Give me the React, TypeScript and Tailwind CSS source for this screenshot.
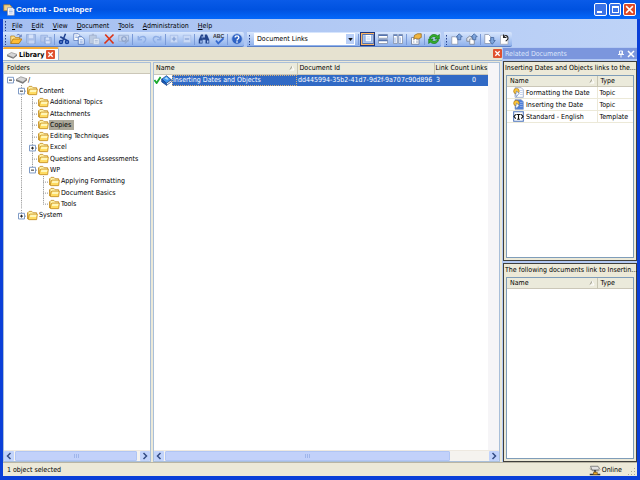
import React from 'react';

interface IconProps {
    className?: string;
}

const Svg: React.FC<{ children: React.ReactNode; className?: string }> = ({ children, className = 'w-[12px] h-[12px]' }) => (
    <svg viewBox="0 0 16 16" className={`shrink-0 ${className}`} fill="none" aria-hidden="true">
        {children}
    </svg>
);

const FolderIcon: React.FC<IconProps> = ({ className }) => (
    <Svg className={className}>
        <path d="M1 13V4l2-2h4l2 2h5v3" fill="#fff3a8" stroke="#c28a20" strokeWidth="1.2" />
        <path d="M1 4v9l2 1h11l1-8H5L3 7l-1 6" fill="#ffdc62" stroke="#c28a20" strokeWidth="1.2" />
        <path d="M5 7h9l-1 3H4z" fill="#fff6b8" />
    </Svg>
);

const OpenIcon = () => (
    <Svg>
        <path d="M1 14V4h5l1 2h6v3" fill="#ffe189" stroke="#b8811a" />
        <path d="M1 14l3-6h12l-4 6z" fill="#ffbd35" stroke="#a8700d" />
        <path d="M9 3c2-2 4-1 5 1M15 2v3h-3" stroke="#405da8" />
    </Svg>
);

const SaveIcon = () => (
    <Svg>
        <path d="M2 2h12v12H3l-1-1z" fill="#a9bfe8" stroke="#8fa9da" />
        <path d="M5 2h6v5H5z" fill="#d6e3fa" />
        <path d="M5 10h7v4H5z" fill="#c5d5f4" />
    </Svg>
);

const SaveAllIcon = () => (
    <Svg>
        <path d="M1 3h9v9H1z" fill="#b2c6ec" stroke="#96afdd" />
        <path d="M6 6h9v8H6z" fill="#a9bfe8" stroke="#8fa9da" />
        <path d="M8 6h4v3H8zM8 11h5v3H8z" fill="#d6e3fa" />
    </Svg>
);

const CutIcon = () => (
    <Svg>
        <path d="M10 1L6 11M3 5l9 5" stroke="#20418f" strokeWidth="2" />
        <circle cx="4" cy="12" r="2" stroke="#123c9c" strokeWidth="2" />
        <circle cx="12" cy="12" r="2" stroke="#123c9c" strokeWidth="2" />
    </Svg>
);

const CopyIcon = () => (
    <Svg>
        <path d="M1 1h6l2 2v7H1z" fill="#fff" stroke="#5577bb" />
        <path d="M7 5h5l3 3v7H7z" fill="#f3f8ff" stroke="#3d64b0" />
        <path d="M3 4h3M3 6h4M9 9h4M9 11h4M9 13h4" stroke="#7c9ddb" />
    </Svg>
);

const PasteIcon = () => (
    <Svg>
        <path d="M2 3h9v11H2z" fill="#bccbe2" stroke="#9daecc" />
        <path d="M5 1h3v3H5z" fill="#aab9d5" />
        <path d="M7 7h8v8H7z" fill="#e1e9f5" stroke="#a4b5d3" />
        <path d="M9 10h4M9 12h4" stroke="#a4b5d3" />
    </Svg>
);

const DeleteIcon = () => (
    <Svg>
        <path d="M3 2l11 12M14 2L2 14" stroke="#dd3215" strokeWidth="2.2" />
    </Svg>
);

const RenameIcon = () => (
    <Svg>
        <path d="M1 3h13v8H1z" fill="#c3d1ea" stroke="#94a9cf" />
        <circle cx="8" cy="8" r="3" stroke="#8aa0c9" strokeWidth="1.5" />
        <path d="M9 14l5-5" stroke="#94a9cf" strokeWidth="2" />
    </Svg>
);

const UndoIcon = () => (
    <Svg>
        <path d="M3 4v5h5M3 9c2-5 9-6 10-1 0 3-2 4-3 5" stroke="#8faee5" strokeWidth="1.8" />
    </Svg>
);

const RedoIcon = () => (
    <Svg>
        <path d="M13 4v5H8M13 9C11 4 4 3 3 8c0 3 2 4 3 5" stroke="#8faee5" strokeWidth="1.8" />
    </Svg>
);

const PlusIcon = () => (
    <Svg>
        <path d="M3 3h10v10H3z" fill="#c9d9f6" stroke="#a6bce6" />
        <path d="M8 5v6M5 8h6" stroke="#7f9cd3" strokeWidth="1.5" />
    </Svg>
);

const MinusIcon = () => (
    <Svg>
        <path d="M3 3h10v10H3z" fill="#c9d9f6" stroke="#a6bce6" />
        <path d="M5 8h6" stroke="#7f9cd3" strokeWidth="1.5" />
    </Svg>
);

const FindIcon = () => (
    <Svg>
        <path d="M4 2h3v4h2V2h3l3 7v5h-5V9H6v5H1V9z" fill="#23448c" />
        <path d="M3 10h2v3H3zM12 10h2v3h-2zM5 4h1v3H5z" fill="#a9c5f5" />
    </Svg>
);

const SpellIcon = () => (
    <Svg>
        <text x="0" y="7" fontSize="7" fontWeight="700" fontFamily="Liberation Sans, sans-serif" fill="#333">ABC</text>
        <path d="M4 10l3 4 7-7" stroke="#3569cd" strokeWidth="2.4" />
    </Svg>
);

const HelpIcon = () => (
    <Svg>
        <circle cx="8" cy="8" r="7" fill="#2e62c4" stroke="#9db9ea" />
        <path d="M5.500 6c0-3 5-3 5 0 0 2-2.500 2-2.500 4M8 11v2" stroke="#fff" strokeWidth="1.8" />
    </Svg>
);

const PaneLeftIcon = () => (
    <Svg>
        <path d="M1 2h14v12H1z" fill="#fff" stroke="#5375b3" strokeWidth="1.5" />
        <path d="M2 3h3v10H2zM2 11h12v2H2zM12 3h2v9h-2z" fill="#94b3e8" />
        <path d="M6 5h5M6 7h5M6 9h5" stroke="#bdd0f1" />
    </Svg>
);

const PaneRowsIcon = () => (
    <Svg>
        <path d="M2 2h12v5H2zM2 9h12v5H2z" fill="#fff" stroke="#7f8ba4" />
        <path d="M2 2h12v2H2zM2 9h12v2H2z" fill="#5474b2" />
    </Svg>
);

const PaneColsIcon = () => (
    <Svg>
        <path d="M2 2h5v12H2zM9 2h5v12H9z" fill="#fff" stroke="#7f8ba4" />
        <path d="M2 2h5v2H2zM9 2h5v2H9z" fill="#6483bd" />
        <path d="M4 6v7M11 6v7" stroke="#b5c9ee" strokeWidth="2" />
    </Svg>
);

const PropertiesIcon = () => (
    <Svg>
        <path d="M2 6h10v9H2z" fill="#fff" stroke="#66728c" />
        <path d="M4 9h2M4 12h2M8 9h3M8 12h3" stroke="#7385aa" />
        <path d="M6 3l4-2h5v5l-4 2-3-1-3 1z" fill="#f1b540" stroke="#94681a" />
    </Svg>
);

const RefreshIcon = () => (
    <Svg>
        <path d="M2 7c1-6 8-6 11-3l2-2v6H9l2-2C8 4 5 5 4 7z" fill="#36b22a" stroke="#147715" />
        <path d="M14 9c-1 6-8 6-11 3l-2 2V8h6l-2 2c3 2 6 1 7-1z" fill="#36b22a" stroke="#147715" />
    </Svg>
);

const CheckInIcon = () => (
    <Svg>
        <path d="M1 5h5l3 3v7H1z" fill="#fff" stroke="#8691a9" />
        <path d="M11 1l4 4h-2v4H9V5H7z" fill="#7ea5dd" stroke="#3f6199" />
    </Svg>
);

const CheckInAllIcon = () => (
    <Svg>
        <path d="M1 7l4-3 4 3v4H1z" fill="#e4e7ed" stroke="#707988" />
        <path d="M5 8h6v7H5z" fill="#fff" stroke="#707988" />
        <path d="M11 1l4 4h-2v4H9V5H7z" fill="#7ea5dd" stroke="#3f6199" />
    </Svg>
);

const CheckOutIcon = () => (
    <Svg>
        <path d="M1 2h5l3 3v9H1z" fill="#fff" stroke="#8691a9" />
        <path d="M9 6h4v4h2l-4 5-4-5h2z" fill="#7ea5dd" stroke="#3f6199" />
    </Svg>
);

const UndoCheckOutIcon = () => (
    <Svg>
        <path d="M2 3h7l3 3v9H2z" fill="#fff" stroke="#a0a8b6" />
        <path d="M6 2v4h4M6 6c2-4 6-3 6 1 0 2-2 3-3 4" stroke="#242424" strokeWidth="1.4" />
    </Svg>
);

const DriveIcon: React.FC<IconProps> = ({ className }) => (
    <Svg className={className}>
        <path d="M0 8l7-4 9 3-6 5z" fill="#d5d5d5" stroke="#858585" />
        <path d="M0 8v2l10 4v-2zM10 12v2l6-5V7z" fill="#777" />
    </Svg>
);

const AppIcon = () => (
    <Svg>
        <path d="M1 1h8l2 2v6H1z" fill="#f0d28c" stroke="#a8782a" />
        <path d="M6 5h7l2 2v8H6z" fill="#fff" stroke="#8392b5" />
        <path d="M8 8h5M8 10h5M8 12h5" stroke="#8ba9dd" />
    </Svg>
);

const BookIcon = () => (
    <Svg className="w-[11px] h-[11px]">
        <path d="M1 6l7-5 7 6-7 5z" fill="#3b94ee" stroke="#103a80" />
        <path d="M1 6v4l7 5v-3z" fill="#175abb" stroke="#103a80" />
        <path d="M8 12l7-5v3l-7 5z" fill="#fff" stroke="#103a80" />
        <path d="M5 5l3-2 3 3-2 1z" fill="#a7dcff" />
    </Svg>
);

const TopicIcon: React.FC<{ blue?: boolean }> = ({ blue }) => (
    <Svg className="w-[11px] h-[11px]">
        <path d="M3 1h9l3 3v11H3z" fill={blue ? '#4b7ddc' : '#fff'} stroke="#8194ba" />
        <path d="M10 5h4M10 8h4M10 11h4" stroke="#a9bfe9" />
        <circle cx="5" cy="6" r="4" fill="#ffc638" stroke="#a97411" />
        <path d="M5 6l4 3-4 5-1-3z" fill="#fff" stroke="#5878af" />
    </Svg>
);

const TemplateIcon = () => (
    <Svg className="w-[11px] h-[11px]">
        <path d="M1 1h14v14H1z" fill="#fff" stroke="#4b73bb" strokeWidth="1.5" />
        <path d="M4 5L1.500 8 4 11M12 5l2.500 3L12 11M5 5h6M8 5v7M6 12h4" stroke="#111" strokeWidth="1.6" />
    </Svg>
);

const OnlineIcon = () => (
    <Svg>
        <path d="M2 3h10l2 3-3 2H4z" fill="#e2e2e2" stroke="#666" />
        <path d="M1 6l4 3h8l2-2" stroke="#777" />
        <path d="M8 8v5M1 14h14" stroke="#333" strokeWidth="2" />
        <path d="M6 11h5v3H6z" fill="#f0ac27" stroke="#7d5b1b" />
    </Svg>
);

const CloseBox = ({ label }: { label: string }) => (
    <button aria-label={label} className="flex h-[9px] w-[9px] items-center justify-center rounded-[1px] bg-[#e0512f]">
        <Svg className="w-[7px] h-[7px]">
            <path d="M3 3l10 10M13 3L3 13" stroke="#fff" strokeWidth="3" />
        </Svg>
    </button>
);

const Grip = () => (
    <svg viewBox="0 0 5 11" className="h-[11px] w-[5px] shrink-0" aria-hidden="true">
        <path d="M2.500 1v10" stroke="#27418c" strokeDasharray="1.500 1.500" />
    </svg>
);

const Sep = () => (
    <span className="flex w-[3px] shrink-0 justify-center">
        <span className="h-[11px] w-px bg-[#7a9ad8]"></span>
    </span>
);

const Tool: React.FC<{ label: string; children: React.ReactNode; narrow?: boolean; active?: boolean }> = ({ label, children, narrow, active }) => (
    <button
        aria-label={label}
        className={`flex h-[14px] shrink-0 items-center justify-center ${narrow ? 'w-[13px]' : 'w-[15px]'} ${active ? 'border border-[#20367c] bg-[#fdb460]' : ''
            }`}
    >
        {children}
    </button>
);

const Bar: React.FC<{ children: React.ReactNode }> = ({ children }) => (
    <div className="flex h-[15px] shrink-0 items-center rounded-r-[2px] border-b border-[#5b81c8] bg-linear-to-b from-[#d9e7fd] to-[#8eb0eb]">
        {children}
    </div>
);

const HScroll: React.FC<{ thumb: string }> = ({ thumb }) => (
    <div className="flex h-[11px] shrink-0 items-stretch border-t border-[#eee9e0] bg-[#f5f3ef]">
        <button aria-label="Scroll left" className="flex w-[10px] items-center justify-center rounded-[1px] bg-[#c1d3fb]">
            <Svg className="w-[8px] h-[8px]">
                <path d="M11 2L5 8l6 6" stroke="#344d84" strokeWidth="3" />
            </Svg>
        </button>
        <div className="flex flex-1 px-px">
            <div className={`flex items-center justify-center gap-px rounded-[1px] border border-[#b0c5f4] bg-[#c2d1fa] ${thumb}`}>
                <span className="h-[4px] w-px bg-[#9fb5ea]"></span>
                <span className="h-[4px] w-px bg-[#9fb5ea]"></span>
                <span className="h-[4px] w-px bg-[#9fb5ea]"></span>
            </div>
        </div>
        <button aria-label="Scroll right" className="flex w-[10px] items-center justify-center rounded-[1px] bg-[#c1d3fb]">
            <Svg className="w-[8px] h-[8px]">
                <path d="M5 2l6 6-6 6" stroke="#344d84" strokeWidth="3" />
            </Svg>
        </button>
    </div>
);

const SortMark = () => (
    <svg viewBox="0 0 6 6" className="h-[6px] w-[6px] shrink-0" fill="none" aria-hidden="true">
        <path d="M1 5l2-4" stroke="#9b9a8e" />
        <path d="M3 1l2 4H1" stroke="#fff" />
    </svg>
);

// guides: one letter per column left of the icon
// '|' line, 't' branch, 'l' last branch, '+' / '-' expander, ' ' blank
interface TreeRow {
    guides: string;
    label: string;
    drive?: boolean;
    selected?: boolean;
}

const treeRows: TreeRow[] = [
    { guides: '-', label: '/', drive: true },
    { guides: ' -', label: 'Content' },
    { guides: ' |t', label: 'Additional Topics' },
    { guides: ' |t', label: 'Attachments' },
    { guides: ' |t', label: 'Copies', selected: true },
    { guides: ' |t', label: 'Editing Techniques' },
    { guides: ' |+', label: 'Excel' },
    { guides: ' |t', label: 'Questions and Assessments' },
    { guides: ' |-', label: 'WP' },
    { guides: ' | t', label: 'Applying Formatting' },
    { guides: ' | t', label: 'Document Basics' },
    { guides: ' | l', label: 'Tools' },
    { guides: ' +', label: 'System' },
];

const Guide: React.FC<{ kind: string; root: boolean; last: boolean }> = ({ kind, root, last }) => {
    const box = kind === '+' || kind === '-';
    return (
        <svg viewBox="0 0 11 12" preserveAspectRatio="none" className="h-full w-[11px] shrink-0" fill="none" aria-hidden="true">
            {kind !== ' ' && !root && (
                <path d={kind === 'l' || last ? 'M5.500 0v6' : 'M5.500 0v12'} stroke="#8c8c8c" strokeDasharray="1 1" />
            )}
            {kind !== ' ' && kind !== '|' && <path d="M5 6.500h6" stroke="#8c8c8c" strokeDasharray="1 1" />}
            {box && <path d="M2.500 3.500h6v6h-6z" fill="#fff" stroke="#7b98c4" />}
            {box && <path d={kind === '+' ? 'M4 6.500h3M5.500 5v3' : 'M4 6.500h3'} stroke="#222" />}
        </svg>
    );
};

const menus = ['File', 'Edit', 'View', 'Document', 'Tools', 'Administration', 'Help'];

const related = [
    { name: 'Formatting the Date', type: 'Topic', icon: <TopicIcon /> },
    { name: 'Inserting the Date', type: 'Topic', icon: <TopicIcon blue /> },
    { name: 'Standard - English', type: 'Template', icon: <TemplateIcon /> },
];

const RelatedPanel: React.FC<{ title: string; rows: typeof related }> = ({ title, rows }) => (
    <section className="flex min-h-0 flex-1 flex-col border border-[#3f3f3c] bg-[#ece9d8] pb-[2px]">
        <h2 className="shrink-0 pl-px leading-[13px] whitespace-nowrap">{title}</h2>
        <div className="mx-[2px] min-h-0 flex-1 border border-[#7f9db9] bg-white">
            <table className="w-full table-fixed border-collapse text-left text-[7px] leading-[10px]">
                <colgroup>
                    <col />
                    <col className="w-[36px]" />
                </colgroup>
                <thead className="h-[10px] border-b border-[#cbc7b8] bg-[#ebeadb]">
                    <tr>
                        <th className="p-0 pl-[3px] font-normal">
                            <div className="flex items-center justify-between pr-[2px]">Name <SortMark /></div>
                        </th>
                        <th className="border-l border-[#c7c5b2] p-0 pl-[3px] font-normal">Type</th>
                    </tr>
                </thead>
                <tbody>
                    {rows.map((row) => (
                        <tr key={row.name} className="h-[12px] border-b border-[#ece9d8]">
                            <td className="p-0">
                                <div className="flex items-center gap-[2px] whitespace-nowrap pl-[6px]">
                                    {row.icon}
                                    {row.name}
                                </div>
                            </td>
                            <td className="border-l border-[#ece9d8] p-0 pl-[2px]">{row.type}</td>
                        </tr>
                    ))}
                </tbody>
            </table>
        </div>
    </section>
);

const App: React.FC = () => {
    return (
        <div className="flex h-screen flex-col overflow-hidden bg-[#0a3fd8] font-['DejaVu_Sans_Condensed','DejaVu_Sans',sans-serif] text-[7px] leading-[10px] text-black">
            {/* Title bar */}
            <header className="flex h-[19px] shrink-0 items-center gap-px bg-linear-to-b from-[#0a5be8] via-[#0052e0] to-[#0468fb] pr-[4px] pl-[3px]">
                <AppIcon />
                <h1 className="flex-1 font-['Liberation_Sans',sans-serif] text-[8px] leading-[12px] font-bold text-white">Content - Developer</h1>
                <div className="flex gap-[2px]">
                    <button aria-label="Minimize" className="flex h-[13px] w-[13px] items-end justify-center rounded-[2px] border border-white bg-[#3a72e6] pb-[2px]">
                        <span className="mr-[3px] h-[2px] w-[5px] bg-white"></span>
                    </button>
                    <button aria-label="Maximize" className="flex h-[13px] w-[12px] items-center justify-center rounded-[2px] border border-white bg-[#3a72e6]">
                        <span className="h-[7px] w-[7px] border border-t-2 border-white"></span>
                    </button>
                    <button aria-label="Close" className="flex h-[13px] w-[13px] items-center justify-center rounded-[2px] border border-white bg-[#dd4a25]">
                        <Svg className="w-[9px] h-[9px]">
                            <path d="M2 2l12 12M14 2L2 14" stroke="#fff" strokeWidth="2.6" />
                        </Svg>
                    </button>
                </div>
            </header>

            <div className="mx-[3px] mb-[4px] flex min-h-0 flex-1 flex-col bg-[#ece9d8]">
                {/* Menus */}
                <nav className="flex h-[13px] shrink-0 items-center bg-linear-to-r from-[#a5bff1] to-[#bed3f7]">
                    <Grip />
                    <ul className="flex gap-[9px] pl-[4px]">
                        {menus.map((menu) => (
                            <li key={menu}>
                                <button className="block">
                                    <u>{menu[0]}</u>{menu.slice(1)}
                                </button>
                            </li>
                        ))}
                    </ul>
                </nav>

                {/* Toolbars */}
                <div className="flex h-[15px] shrink-0 gap-[3px] bg-linear-to-r from-[#a5bff1] to-[#bed3f7]">
                    <Bar>
                        <Grip />
                        <Tool label="Open"><OpenIcon /></Tool>
                        <Tool label="Save"><SaveIcon /></Tool>
                        <Tool label="Save All"><SaveAllIcon /></Tool>
                        <Sep />
                        <Tool label="Cut"><CutIcon /></Tool>
                        <Tool label="Copy"><CopyIcon /></Tool>
                        <Tool label="Paste"><PasteIcon /></Tool>
                        <Tool label="Delete"><DeleteIcon /></Tool>
                        <Tool label="Rename"><RenameIcon /></Tool>
                        <Sep />
                        <Tool label="Undo"><UndoIcon /></Tool>
                        <Tool label="Redo"><RedoIcon /></Tool>
                        <Sep />
                        <Tool label="Expand" narrow><PlusIcon /></Tool>
                        <Tool label="Collapse" narrow><MinusIcon /></Tool>
                        <Sep />
                        <Tool label="Find"><FindIcon /></Tool>
                        <Tool label="Spelling"><SpellIcon /></Tool>
                        <Sep />
                        <Tool label="Help"><HelpIcon /></Tool>
                    </Bar>
                    <Bar>
                        <Grip />
                        <div className="mr-[2px] ml-[2px] flex h-[12px] w-[101px] items-center bg-white pr-px">
                            <select aria-label="View" className="h-[12px] flex-1 appearance-none pl-[3px] leading-[12px] outline-none">
                                <option>Document Links</option>
                            </select>
                            <span className="pointer-events-none flex h-[10px] w-[8px] items-center justify-center bg-[#b9cff7]">
                                <svg viewBox="0 0 6 4" className="h-[3px] w-[5px]" aria-hidden="true">
                                    <path d="M0 0h6L3 4z" fill="#111" />
                                </svg>
                            </span>
                        </div>
                        <Sep />
                        <Tool label="Details pane" active><PaneLeftIcon /></Tool>
                        <Tool label="Split rows"><PaneRowsIcon /></Tool>
                        <Tool label="Split columns"><PaneColsIcon /></Tool>
                        <Sep />
                        <Tool label="Properties"><PropertiesIcon /></Tool>
                        <Sep />
                        <Tool label="Refresh"><RefreshIcon /></Tool>
                    </Bar>
                    <Bar>
                        <Grip />
                        <Tool label="Check In"><CheckInIcon /></Tool>
                        <Tool label="Check In All"><CheckInAllIcon /></Tool>
                        <Sep />
                        <Tool label="Check Out"><CheckOutIcon /></Tool>
                        <Tool label="Undo Check Out"><UndoCheckOutIcon /></Tool>
                    </Bar>
                </div>

                <div className="flex min-h-0 flex-1">
                    <div className="flex min-w-0 flex-1 flex-col">
                        {/* Document tabs */}
                        <div className="flex h-[14px] shrink-0 items-center justify-between border-b border-[#9eb4cf] bg-[#e6e2d0]">
                            <div className="flex h-full w-[56px] items-center gap-[2px] rounded-t-[2px] border-t-2 border-r border-t-[#f5ac35] border-r-[#9eb4cf] bg-[#fcfcfa] pl-[4px]">
                                <DriveIcon className="w-[10px] h-[10px]" />
                                <span className="flex-1 font-bold">Library</span>
                                <span className="pr-[3px]"><CloseBox label="Close tab" /></span>
                            </div>
                            <CloseBox label="Close view" />
                        </div>

                        <div className="flex min-h-0 flex-1 gap-[2px] pt-px pr-[2px]">
                            {/* Folder tree */}
                            <aside className="flex w-[148px] shrink-0 flex-col border border-[#a9bfd9] bg-white">
                                <h2 className="h-[11px] shrink-0 border-b border-[#cbc7b8] bg-[#ebeadb] pl-[3px]">Folders</h2>
                                <ul className="grid h-[147px] auto-rows-fr pl-px">
                                    {treeRows.map((row) => (
                                        <li key={row.label} className="flex min-h-0 items-center">
                                            {row.guides.split('').map((kind, i) => (
                                                <Guide key={i} kind={kind} root={row.label === '/'} last={row.label === 'System' || (row.label === 'WP' && kind === '-')} />
                                            ))}
                                            {row.drive ? <DriveIcon className="w-[11px] h-[11px]" /> : <FolderIcon className="w-[11px] h-[11px]" />}
                                            <span className={`px-[1px] ${row.selected ? 'bg-[#aca899] pr-[3px]' : ''}`}>{row.label}</span>
                                        </li>
                                    ))}
                                </ul>
                                <div className="flex-1"></div>
                                <HScroll thumb="w-[122px]" />
                            </aside>

                            {/* Document list */}
                            <main className="flex min-w-0 flex-1 flex-col border border-[#a9bfd9] bg-white">
                                <div className="flex min-h-0 flex-1">
                                    <div className="min-w-0 flex-1 overflow-hidden">
                                        <table className="w-full table-fixed border-collapse text-left">
                                            <colgroup>
                                                <col />
                                                <col className="w-[137px]" />
                                                <col className="w-[36px]" />
                                                <col className="w-[18px]" />
                                            </colgroup>
                                            <thead className="h-[11px] border-b border-[#cbc7b8] bg-[#ebeadb]">
                                                <tr className="whitespace-nowrap">
                                                    <th className="p-0 pl-[2px] font-normal">
                                                        <div className="flex items-center justify-between pr-[2px]">Name <SortMark /></div>
                                                    </th>
                                                    <th className="border-l border-[#c7c5b2] p-0 pl-[2px] font-normal">Document Id</th>
                                                    <th className="border-l border-[#c7c5b2] p-0 pl-px font-normal">Link Count</th>
                                                    <th className="p-0 pl-px font-normal">Links</th>
                                                </tr>
                                            </thead>
                                            <tbody>
                                                <tr className="h-[11px] whitespace-nowrap text-white">
                                                    <td className="p-0">
                                                        <div className="flex items-center">
                                                            <Svg className="w-[7px] h-[8px]">
                                                                <path d="M1 8l5 7L15 1" stroke="#18a82a" strokeWidth="4" />
                                                            </Svg>
                                                            <BookIcon />
                                                            <span className="flex-1 border border-dotted border-[#d6b27a] bg-[#316ac5] leading-[9px]">Inserting Dates and Objects</span>
                                                        </div>
                                                    </td>
                                                    <td className="bg-[#316ac5] p-0 pl-px">dd445994-35b2-41d7-9d2f-9a707c90d896</td>
                                                    <td className="bg-[#316ac5] p-0 pl-[2px]">3</td>
                                                    <td className="bg-[#316ac5] p-0 pl-[2px]">0</td>
                                                </tr>
                                            </tbody>
                                        </table>
                                    </div>
                                    <div className="w-[11px] shrink-0 bg-[#f6f5f7]"></div>
                                </div>
                                <HScroll thumb="w-[285px]" />
                            </main>
                        </div>
                    </div>

                    {/* Related documents */}
                    <aside className="flex w-[135px] shrink-0 flex-col gap-[2px] bg-[#b3c9f3] pt-px pl-px">
                        <div className="flex h-[11px] shrink-0 items-center bg-[#7b96dd] pr-[2px] pl-[2px] text-[#dce6fb]">
                            <h2 className="flex-1">Related Documents</h2>
                            <button aria-label="Pin" className="mr-[2px]">
                                <Svg className="w-[8px] h-[8px]">
                                    <path d="M5 2h6v6H5zM2 9h12M8 9v6M10 2v6" stroke="#fff" strokeWidth="1.8" />
                                </Svg>
                            </button>
                            <button aria-label="Close panel">
                                <Svg className="w-[8px] h-[8px]">
                                    <path d="M2 2l12 12M14 2L2 14" stroke="#fff" strokeWidth="3" />
                                </Svg>
                            </button>
                        </div>
                        <RelatedPanel title="Inserting Dates and Objects links to the..." rows={related} />
                        <RelatedPanel title="The following documents link to Insertin..." rows={[]} />
                    </aside>
                </div>

                {/* Status bar */}
                <footer className="flex h-[14px] shrink-0 items-center border-t border-[#b9b5a4] pl-[4px]">
                    <span className="flex-1">1 object selected</span>
                    <OnlineIcon />
                    <span className="pr-[6px] pl-px">Online</span>
                    <svg viewBox="0 0 8 8" className="mt-[4px] mr-px h-[8px] w-[8px]" fill="#aaa695" aria-hidden="true">
                        <path d="M6 0h1v1H6zM3 3h1v1H3zM6 3h1v1H6zM0 6h1v1H0zM3 6h1v1H3zM6 6h1v1H6z" />
                    </svg>
                </footer>
            </div>
        </div>
    );
};

export default App;
